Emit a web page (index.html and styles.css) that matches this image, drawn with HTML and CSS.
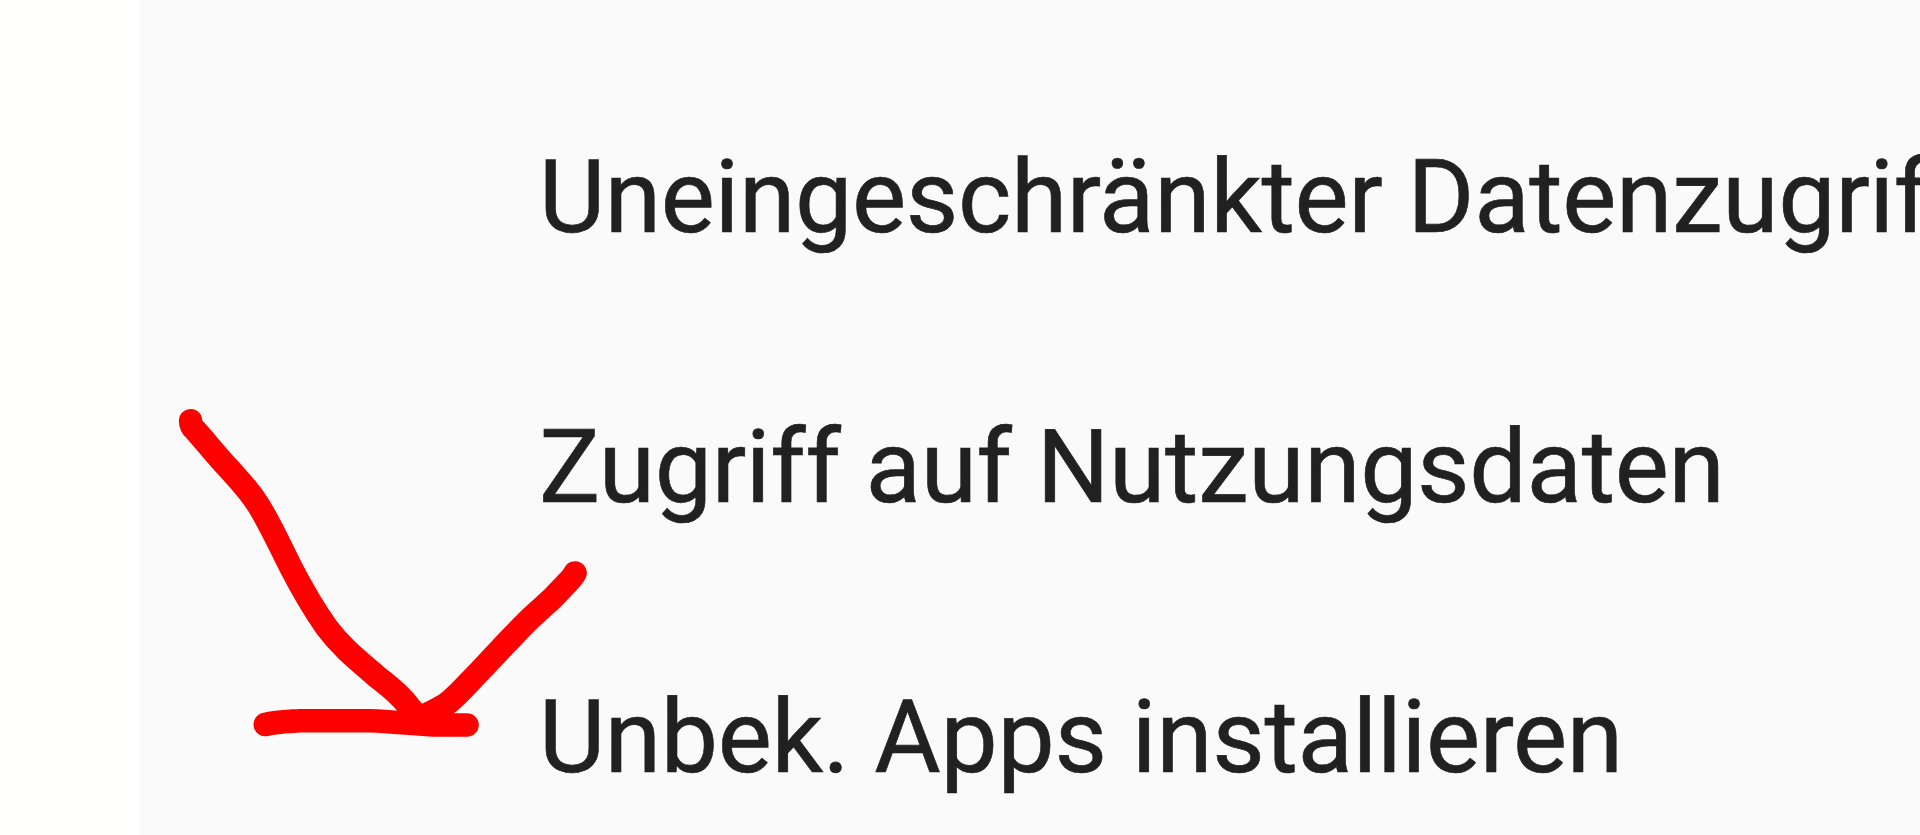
FILE: index.html
```
<!DOCTYPE html>
<html lang="de">
<head>
    <meta charset="UTF-8" />
    <title>Spezieller App-Zugriff</title>
    <link rel="stylesheet" href="styles.css">
</head>
<body>
    <main class="settings">
        <ul class="settings-list">
            <li class="settings-item">Uneingeschränkter Datenzugriff</li>
            <li class="settings-item">Zugriff auf Nutzungsdaten</li>
            <li class="settings-item">Unbek. Apps installieren</li>
        </ul>
    </main>

    <!-- hand-drawn arrow pointing at the last entry -->
    <svg class="arrow" viewBox="0 0 1920 835" aria-hidden="true">
        <path d="M190.7 420.7 Q190.5 426 195 430 C206 442 216 455 228.3 468 C238 479 247 488 256 501.5 C268 519 280 546 291 567.5 C301 587 313 608 326.7 627.5 C342 648 359 661 376.7 676.5 C386 684 398 692 409 706.5 L417 716" />
        <path d="M420 718 C430 712 441 709 449 702 C460 693 470 681 480 671 L506.7 642.7 C517 632 526 622 536.7 612.7 C548 603 558 593 566.7 583.3 Q573 577 575 573" />
        <path d="M265.3 724.5 C277 721.5 288 721.5 300 720.7 H370 C395 721.5 418 724.5 440 725 H467" />
    </svg>
</body>
</html>
```

FILE: styles.css
```
body {
    margin: 0;
    height: 100vh;
    overflow: hidden;
    background: #fefefc;
    color: #212121;
    font-family: Roboto, sans-serif;
}

.settings {
    height: 100%;
    margin-left: 140px;
    background: #fafafa;
    overflow: hidden;
}

.settings-list {
    list-style: none;
    margin: 0;
    padding: 62px 0 0 399px;
}

.settings-item {
    height: 270px;
    line-height: 270px;
    font-size: 102px;
    letter-spacing: -0.34px;
    white-space: nowrap;
    -webkit-text-stroke: 0.6px #212121;
}

.arrow {
    position: absolute;
    top: 0;
    left: 0;
    width: 1920px;
    height: 835px;
    fill: none;
    stroke: #ff0000;
    stroke-width: 23.6;
    stroke-linecap: round;
    stroke-linejoin: round;
}
```
